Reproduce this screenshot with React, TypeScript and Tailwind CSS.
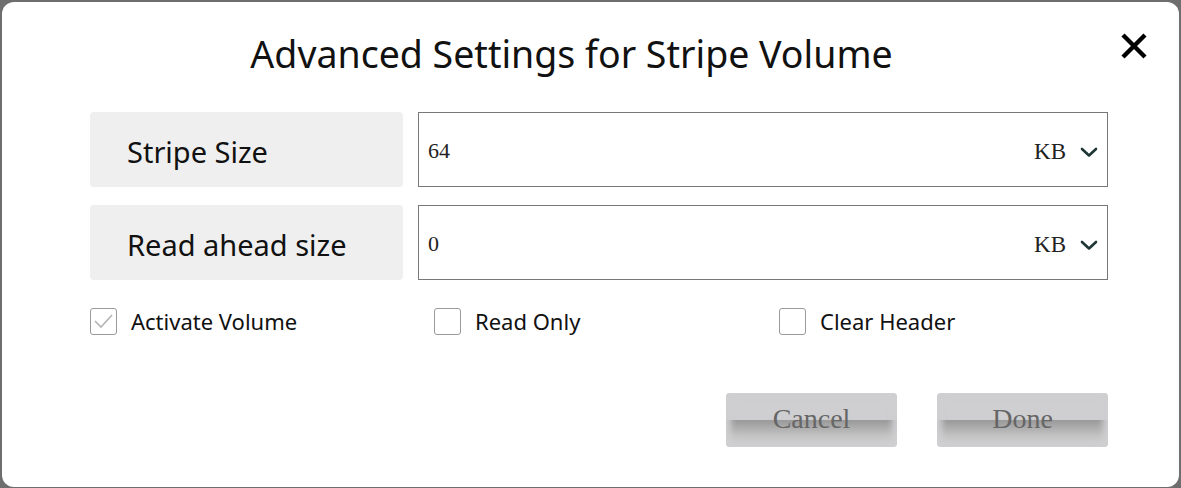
import { useState } from 'react'

function Chevron() {
  return (
    <svg width="18" height="11" viewBox="0 0 18 11" className="shrink-0">
      <polyline points="2,2 9,8.5 16,2" fill="none" stroke="#1d3634" strokeWidth="2.6" strokeLinecap="round" strokeLinejoin="round" />
    </svg>
  )
}

function SizeRow({ label, value }: { label: string; value: string }) {
  return (
    <div className="flex h-[75px] gap-[15px]">
      <div className="w-[313px] rounded-[4px] bg-[#efefef] flex items-center pl-[37px] pt-[4px] text-[29px] leading-[40px] text-[#111]">
        {label}
      </div>
      <div className="flex-1 border border-[#777] flex items-center pl-[9px] pr-[9px] pt-[6px]">
        <span className="flex-1 -mt-[4px] font-['Liberation_Serif',serif] text-[22px] text-[#222]">{value}</span>
        <span className="font-['Liberation_Serif',serif] text-[23px] text-[#222] mr-[14px]">KB</span>
        <Chevron />
      </div>
    </div>
  )
}

function Check({ label, checked, onToggle }: { label: string; checked: boolean; onToggle: () => void }) {
  return (
    <button type="button" onClick={onToggle} className="flex items-center gap-[14px]">
      <span className="w-[27px] h-[27px] rounded-[3px] border border-[#9a9a9a] bg-white flex items-center justify-center">
        {checked && (
          <svg width="21" height="16" viewBox="0 0 21 16">
            <polyline points="2,8 8,14 19,2" fill="none" stroke="#b4b4b4" strokeWidth="1.6" />
          </svg>
        )}
      </span>
      <span className="text-[22px] leading-[28px] text-[#111]">{label}</span>
    </button>
  )
}

function GrayButton({ children }: { children: string }) {
  return (
    <button
      type="button"
      className="w-[171px] h-[54px] rounded-[4px] pb-[3px] font-['Liberation_Serif',serif] text-[28px] text-[#666] bg-[linear-gradient(to_bottom,#cfcfd1_0%,#cfcfd1_49%,#9a9a9a_51%,#c4c4c4_80%,#cfcfd1_100%)] shadow-[inset_0_0_6px_5px_#cfcfd1]"
    >
      {children}
    </button>
  )
}

export default function App() {
  const [active, setActive] = useState(true)
  const [readOnly, setReadOnly] = useState(false)
  const [clearHeader, setClearHeader] = useState(false)

  return (
    <div className="w-[1181px] h-[488px] bg-[#6e6e6e] pt-[2px] px-[2px] pb-[1px] font-['Noto_Sans','Open_Sans',sans-serif]">
      <div className="h-full bg-white rounded-[12px] flex flex-col">
        <div className="h-[110px] flex items-start pt-[27px]">
          <h1 className="flex-1 pl-[21px] text-center text-[37.5px] leading-[50px] text-[#111]">
            Advanced Settings for Stripe Volume
          </h1>
          <button type="button" className="mt-[4px] mr-[31px] w-[28px] h-[26px]">
            <svg width="28" height="26" viewBox="0 0 28 26">
              <path d="M3 2 L25 24 M25 2 L3 24" stroke="#000" strokeWidth="4.4" strokeLinecap="butt" />
            </svg>
          </button>
        </div>

        <div className="pl-[88px] pr-[71px] flex flex-col gap-[18px]">
          <SizeRow label="Stripe Size" value="64" />
          <SizeRow label="Read ahead size" value="0" />
        </div>

        <div className="pl-[88px] mt-[27px] grid grid-cols-[344px_345px_1fr]">
          <Check label="Activate Volume" checked={active} onToggle={() => setActive(!active)} />
          <Check label="Read Only" checked={readOnly} onToggle={() => setReadOnly(!readOnly)} />
          <Check label="Clear Header" checked={clearHeader} onToggle={() => setClearHeader(!clearHeader)} />
        </div>

        <div className="mt-[58px] pr-[71px] flex justify-end gap-[40px]">
          <GrayButton>Cancel</GrayButton>
          <GrayButton>Done</GrayButton>
        </div>
      </div>
    </div>
  )
}
